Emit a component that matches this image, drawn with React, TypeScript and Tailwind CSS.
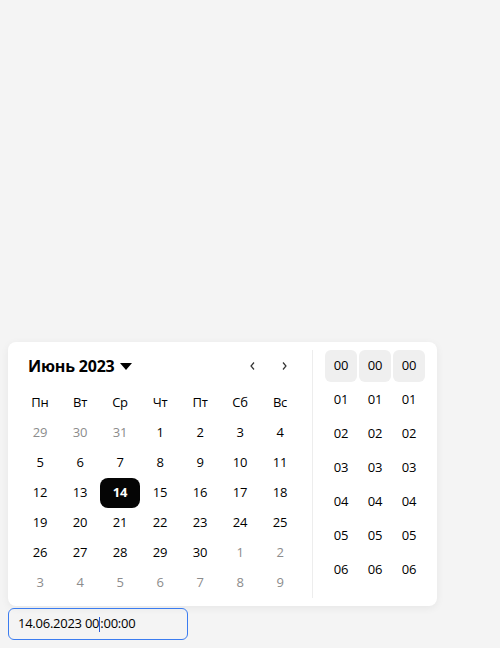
import React from "react";

const weekdays = ["Пн", "Вт", "Ср", "Чт", "Пт", "Сб", "Вс"];
type Day = { n: number; dim?: boolean; sel?: boolean };
const days: Day[] = [
  { n: 29, dim: true }, { n: 30, dim: true }, { n: 31, dim: true },
  ...Array.from({ length: 30 }, (_, i) => ({ n: i + 1, sel: i + 1 === 14 })),
  { n: 1, dim: true }, { n: 2, dim: true }, { n: 3, dim: true }, { n: 4, dim: true },
  { n: 5, dim: true }, { n: 6, dim: true }, { n: 7, dim: true }, { n: 8, dim: true }, { n: 9, dim: true },
];
const hours = ["00", "01", "02", "03", "04", "05", "06"];

export default function App() {
  return (
    <div
      className="w-[500px] h-[648px] bg-[#f4f4f4] flex flex-col justify-end pb-[8px] px-[8px] text-[#000]"
      style={{ fontFamily: '"Open Sans", "Noto Sans", sans-serif' }}
    >
      <div className="w-[429px] bg-white rounded-[8px] shadow-[0_2px_8px_rgba(0,0,0,0.06)] flex pt-[8px] pb-[8px] pl-[12px] pr-[12px]">
        <div className="w-[280px] flex flex-col">
          <div className="h-[32px] flex items-center justify-between pl-[8px]">
            <div className="flex items-center gap-[5px]">
              <span className="text-[16px] font-bold leading-none tracking-[-0.2px]">Июнь 2023</span>
              <svg width="12" height="7" viewBox="0 0 12 7"><path d="M0 0h12L6 7z" fill="#000" /></svg>
            </div>
            <div className="flex items-center">
              <div className="w-[32px] h-[32px] flex items-center justify-center">
                <svg width="5" height="8" viewBox="0 0 5 8"><path d="M4 0.5L1 4l3 3.5" stroke="#333" strokeWidth="1.2" fill="none" /></svg>
              </div>
              <div className="w-[32px] h-[32px] flex items-center justify-center">
                <svg width="5" height="8" viewBox="0 0 5 8"><path d="M1 0.5L4 4 1 7.5" stroke="#333" strokeWidth="1.2" fill="none" /></svg>
              </div>
            </div>
          </div>
          <div className="grid grid-cols-7 mt-[6px] text-[13px] tracking-[-0.2px]">
            {weekdays.map((w) => (
              <div key={w} className="h-[30px] flex items-center justify-center">{w}</div>
            ))}
            {days.map((d, i) => (
              <div
                key={i}
                className={
                  "h-[30px] flex items-center justify-center rounded-[8px] " +
                  (d.sel ? "bg-[#050505] text-white font-bold" : d.dim ? "text-[#8c8c8c]" : "text-black")
                }
              >
                {d.n}
              </div>
            ))}
          </div>
        </div>
        <div className="w-px bg-[#ededed] ml-[12px] mr-[12px]" />
        <div className="flex gap-[2px]">
          {[0, 1, 2].map((c) => (
            <div key={c} className="flex flex-col gap-[2px]">
              {hours.map((h, i) => (
                <div
                  key={h}
                  className={
                    "w-[32px] h-[32px] flex items-center justify-center rounded-[6px] text-[13px] tracking-[-0.2px] " +
                    (i === 0 ? "bg-[#efefef]" : "")
                  }
                >
                  {h}
                </div>
              ))}
            </div>
          ))}
        </div>
      </div>
      <div className="w-[180px] h-[32px] mt-[2px] border border-[#3b7cf0] rounded-[6px] flex items-center pl-[9px] text-[13px] tracking-[-0.25px]">
        <span>14.06.2023 00</span>
        <span className="inline-block w-px h-[15px] bg-[#2a5bd7]" />
        <span>:00:00</span>
      </div>
    </div>
  );
}
